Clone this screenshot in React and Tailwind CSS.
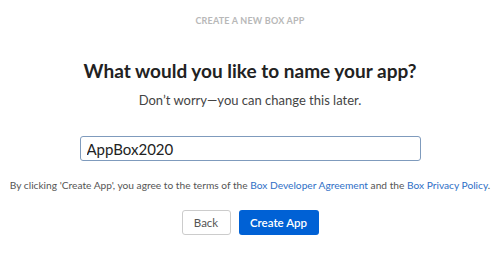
export default function App() {
  return (
    <div className="w-[500px] h-[257px] bg-white flex flex-col items-center font-['Lato',sans-serif] text-[#222]">
      <div className="mt-[15px] text-[9px] font-bold tracking-[0.2px] text-[#b8b8b8] leading-[12px]">
        CREATE A NEW BOX APP
      </div>
      <h1 className="mt-[32px] text-[19px] font-bold leading-[24px] text-[#222]">
        What would you like to name your app?
      </h1>
      <p className="mt-[9px] text-[13px] leading-[16px] text-[#444]">
        Don’t worry—you can change this later.
      </p>
      <input
        className="mt-[28px] w-[341px] h-[25px] px-[6px] border border-[#7f9bbd] rounded-[3px] text-[15px] text-[#222] outline-none"
        defaultValue="AppBox2020"
      />
      <p className="mt-[17px] text-[10.2px] leading-[14px] text-[#555] whitespace-nowrap">
        By clicking 'Create App', you agree to the terms of the{" "}
        <span className="text-[#2f6fc6]">Box Developer Agreement</span> and the{" "}
        <span className="text-[#2f6fc6]">Box Privacy Policy</span>.
      </p>
      <div className="mt-[18px] flex gap-[8px]">
        <button className="w-[49px] h-[25px] border border-[#ccc] rounded-[3px] bg-white text-[11.5px] text-[#555]">
          Back
        </button>
        <button className="w-[80px] h-[25px] rounded-[3px] bg-[#0061d5] text-[11.5px] text-white font-semibold">
          Create App
        </button>
      </div>
    </div>
  );
}
